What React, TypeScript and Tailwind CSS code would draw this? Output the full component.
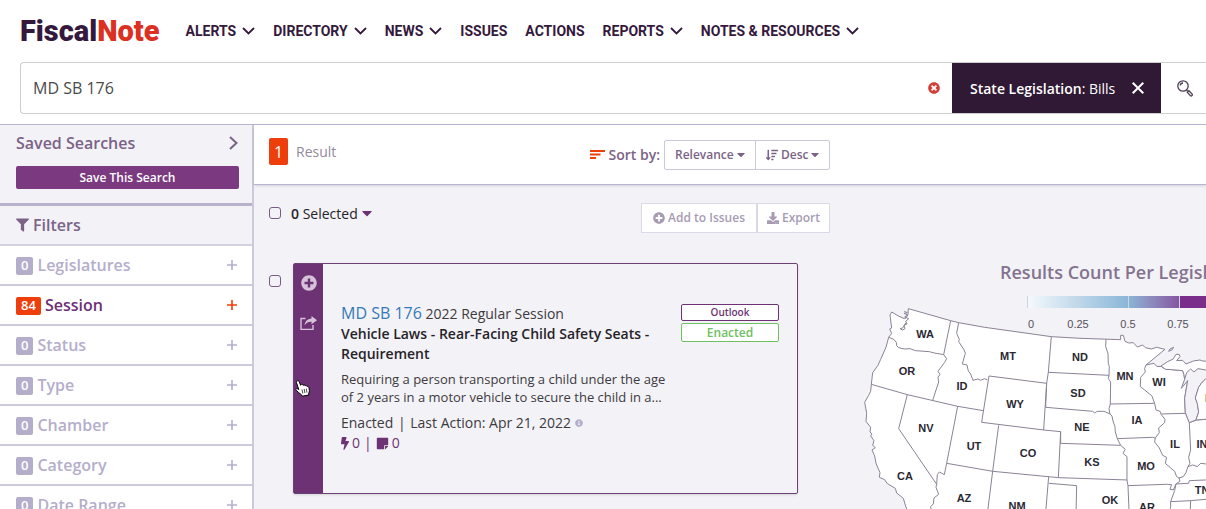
import React from 'react';
import {
  FaBolt,
  FaCaretDown,
  FaDownload,
  FaFilter,
  FaInfoCircle,
  FaPlusCircle,
  FaSortAmountDown,
  FaStickyNote,
  FaTimesCircle,
} from 'react-icons/fa';

const navItems = [
  { label: 'ALERTS', menu: true },
  { label: 'DIRECTORY', menu: true },
  { label: 'NEWS', menu: true },
  { label: 'ISSUES', menu: false },
  { label: 'ACTIONS', menu: false },
  { label: 'REPORTS', menu: true },
  { label: 'NOTES & RESOURCES', menu: true },
];

const filters = [
  { label: 'Legislatures', count: 0 },
  { label: 'Session', count: 84 },
  { label: 'Status', count: 0 },
  { label: 'Type', count: 0 },
  { label: 'Chamber', count: 0 },
  { label: 'Category', count: 0 },
  { label: 'Date Range', count: 0 },
];

// Label centers, in map pixels
const stateLabels = [
  { name: 'WA', x: 75, y: 88 },
  { name: 'OR', x: 57, y: 125 },
  { name: 'ID', x: 112, y: 140 },
  { name: 'MT', x: 158, y: 110 },
  { name: 'ND', x: 230, y: 111 },
  { name: 'SD', x: 228, y: 147 },
  { name: 'MN', x: 275, y: 130 },
  { name: 'WI', x: 309, y: 136 },
  { name: 'WY', x: 165, y: 158 },
  { name: 'NE', x: 232, y: 181 },
  { name: 'IA', x: 287, y: 174 },
  { name: 'NV', x: 76, y: 182 },
  { name: 'UT', x: 124, y: 200 },
  { name: 'CO', x: 178, y: 207 },
  { name: 'KS', x: 242, y: 216 },
  { name: 'MO', x: 296, y: 220 },
  { name: 'IL', x: 325, y: 198 },
  { name: 'IN', x: 352, y: 198 },
  { name: 'CA', x: 55, y: 230 },
  { name: 'AZ', x: 114, y: 252 },
  { name: 'NM', x: 167, y: 260 },
  { name: 'OK', x: 260, y: 254 },
  { name: 'AR', x: 297, y: 261 },
  { name: 'TN', x: 352, y: 244 },
  { name: 'MI', x: 361, y: 152 },
];

const land =
  'M175,176 L302,212 L326,218 L404,232 L604,260 L690,265 L812,269 L812,256 L820,256 L825,274 L836,279 L850,278 L862,291 L878,285 L886,293 L904,297 L920,292 L945,298 L915,323 L888,345 L912,340 L920,349 L935,350 L947,358 L965,359 L998,362 L1002,374 L1004,388 L994,415 L1013,392 L1004,445 L1006,488 L1018,518 L1040,510 L1068,508 L1120,508 L1120,800 L170,800 L170,777 L165,762 L160,745 L140,729 L136,715 L112,701 L104,689 L88,682 L90,668 L78,640 L74,618 L66,600 L76,593 L68,586 L72,572 L62,558 L66,552 L60,546 L62,532 L48,514 L50,490 L44,457 L56,436 L62,424 L64,403 L68,368 L84,346 L92,328 L108,292 L116,262 L125,250 L119,237 L125,234 L120,195 L125,186 L145,198 L163,206 L168,204 L174,194 Z';

const borders = [
  'M302,212 L281,314 L253,309 L238,305 L197,302 L180,296 L163,297 L146,293 L140,287 L139,277 L131,268 L116,262',
  'M281,314 L290,326 L284,337 L264,364 L270,373 L264,382 L266,396 L248,451',
  'M64,403 L172,434 L323,469 L400,482',
  'M326,218 L320,250 L328,268 L326,275 L342,299 L346,310 L337,342 L351,345 L355,363 L362,372 L369,391 L384,387 L392,391 L404,386 L412,390',
  'M417,378 L590,400 L581,540 L395,517 Z',
  'M604,260 L595,367 L590,400 L587,472',
  'M595,367 L777,376',
  'M768,268 L767,290 L774,310 L775,340 L778,350 L777,376 L775,386 L782,396 L781,462 L777,476 L780,492',
  'M587,472 L728,484 L734,489 L742,484 L762,484 L780,492 L786,498 L789,513 L795,530 L796,545 L802,566 L812,586 L826,598 L819,610 L831,620 L831,690 L834,707 L838,800',
  'M632,545 L632,580 L812,586',
  'M581,540 L632,545 L625,683 L428,664 L446,526',
  'M323,469 L290,640 L283,674 L268,666 L262,674 L260,703 L146,536 L172,434',
  'M290,640 L428,664',
  'M260,703 L258,712 L266,733 L252,744 L250,762 L242,770 L246,800',
  'M428,664 L411,800',
  'M596,680 L586,800',
  'M597,700 L680,707 L678,800',
  'M625,683 L831,690',
  'M781,462 L914,460',
  'M888,345 L884,356 L886,366 L872,382 L871,410 L884,420 L906,438 L914,460 L918,480 L930,484 L934,494 L945,508 L944,518 L926,534 L928,548 L916,564 L908,562 L802,566',
  'M934,492 L1006,490',
  'M916,564 L914,576 L928,594 L938,616 L950,622 L946,640 L962,654 L974,664 L980,680 L987,684 L990,694 L978,702 L970,720 L960,718 L965,704 L950,703 L834,707',
  'M978,702 L974,722 L962,755 L962,772 L954,800',
  'M1018,518 L1022,600 L1016,622 L1020,640 L1014,650 L1008,668 L1000,680 L987,684',
  'M1014,650 L1028,645 L1042,650 L1052,640 L1068,642',
  'M978,702 L1016,700 L1018,692 L1068,690',
  'M962,755 L1022,752 L1068,748',
  'M1022,752 L1020,800',
  'M163,184 L172,188 L162,190 L173,195 L164,201 L176,206 L167,214 L171,222 L162,226 L165,236 L158,240 L150,236 L158,234 L168,218',
  'M956,304 L960,297 L971,292 L966,300 Z',
];

const upperPeninsula =
  'M933,348 L953,335 L970,327 L978,313 L988,314 L990,320 L980,332 L998,331 L1008,342 L1030,333 L1050,330 L1058,333 L1090,335 L1090,356 L1068,360 L1044,356 L1032,366 L1022,357 L1010,368 L1004,388 L1002,374 L998,362 L965,359 L947,358 Z';

const lowerPeninsula = 'M1090,372 L1068,386 L1054,400 L1046,412 L1036,444 L1042,460 L1046,486 L1038,510 L1090,506 Z';

function Chevron() {
  return (
    <svg width="13" height="8" viewBox="0 0 13 8" fill="none" stroke="currentColor" strokeWidth="1.800">
      <path d="M1 1l5.500 5.500L12 1" />
    </svg>
  );
}

function Header() {
  return (
    <header className="flex h-[62px] shrink-0 items-center gap-[26px] whitespace-nowrap pl-5 font-['Roboto',sans-serif] text-[#35193d]">
      <a href="#home" className="text-[29px] font-black leading-none">
        Fiscal<span className="text-[#dc3023]">Note</span>
      </a>
      <nav className="flex items-center gap-[18px] text-[14px] font-bold">
        {navItems.map((item) => (
          <a key={item.label} href="#nav" className="flex items-center gap-[6px]">
            {item.label}
            {item.menu && <Chevron />}
          </a>
        ))}
      </nav>
    </header>
  );
}

function SearchBar() {
  return (
    <form className="flex shrink-0 pb-[10px] pl-5">
      <div className="flex h-[52px] flex-1 items-center rounded-l border border-r-0 border-[#cfcfcf]">
        <input
          aria-label="Search"
          defaultValue="MD SB 176"
          className="min-w-0 flex-1 pl-3 text-[16px] text-[#4a4a4a] outline-none"
        />
        <button type="button" aria-label="Clear search" className="mr-3 text-[12px] text-[#d43d33]">
          <FaTimesCircle />
        </button>
        <div className="flex h-full w-[209px] items-center justify-between bg-[#301934] pl-[18px] pr-[17px] text-[14px] text-white">
          <span>
            <span className="font-semibold">State Legislation</span>: Bills
          </span>
          <button type="button" aria-label="Remove filter">
            <svg width="12" height="12" viewBox="0 0 12 12" stroke="currentColor" strokeWidth="2">
              <path d="M.7.7l10.600 10.600M11.300.7L.7 11.300" />
            </svg>
          </button>
        </div>
        <button aria-label="Run search" className="w-[45px] pl-4 text-[#4d3c53]">
          <svg width="16" height="17" viewBox="0 0 16 17" fill="none" stroke="currentColor" strokeWidth="1.300">
            <circle cx="6" cy="6" r="5.200" />
            <path d="M3.200 5.500C3.400 4 4.500 3 6 3M9.500 10l1.300 1.400" />
            <path d="M10.300 12.200l1.600-1.500 3 3.200c.6.700.5 1.300.1 1.700-.5.500-1.200.5-1.700 0z" />
          </svg>
        </button>
      </div>
    </form>
  );
}

function Sidebar() {
  return (
    <aside className="w-[254px] shrink-0 border-r-2 border-[#cdc8dc] bg-[#f3f2f7] text-[16px] font-semibold">
      <div className="border-b-[3px] border-[#b7b1cd] pb-[14px] pl-4 pr-[13px] text-[#7a6386]">
        <a href="#saved" className="flex h-[36px] items-center justify-between pr-px">
          Saved Searches
          <svg width="9" height="14" viewBox="0 0 9 14" fill="none" stroke="currentColor" strokeWidth="2">
            <path d="M1 1l6.500 6L1 13" />
          </svg>
        </a>
        <button className="mt-[5px] h-[23px] w-full rounded-xs bg-[#7b3a80] text-[12px] text-white">
          Save This Search
        </button>
      </div>
      <h2 className="flex h-[40px] items-center gap-1 border-b-2 border-[#d5d1e2] px-4 text-[#7a6386]">
        <FaFilter className="h-[14px] w-[13px]" />
        Filters
      </h2>
      <ul>
        {filters.map((filter) => (
          <li key={filter.label} className="h-[40px] border-b-2 border-[#cdc9de] bg-white">
            <button
              className={`flex h-full w-full items-center gap-1 pl-4 pr-[13px] ${
                filter.count > 0 ? 'text-[#6d2f76]' : 'text-[#b5aecb]'
              }`}
            >
              <span
                className={`mt-[2px] flex h-[18px] items-center rounded-xs px-[5px] text-[13px] text-white ${
                  filter.count > 0 ? 'bg-[#ee3e0c]' : 'bg-[#b5aecb]'
                }`}
              >
                {filter.count}
              </span>
              {filter.label}
              <svg
                width="10"
                height="10"
                viewBox="0 0 10 10"
                strokeWidth="1.600"
                className={`ml-auto mr-[2px] ${filter.count > 0 ? 'stroke-[#ee3e0c]' : 'stroke-[#b5aecb]'}`}
              >
                <path d="M5 0v10M0 5h10" />
              </svg>
            </button>
          </li>
        ))}
      </ul>
    </aside>
  );
}

function ResultsBar() {
  return (
    <div className="flex h-[60px] shrink-0 items-center border-b border-[#b9b4d0] bg-white pl-[15px] text-[#7a6386] shadow-sm">
      <div className="flex w-[561px] items-center justify-between">
        <div className="flex items-center pb-[6px]">
          <span className="flex h-[27px] w-[19px] items-center justify-center rounded-xs bg-[#ee3e0c] text-[16px] text-white">
            1
          </span>
          <span className="ml-2 text-[14px] text-[#94899c]">Result</span>
        </div>
        <div className="flex items-center">
          <svg width="15" height="9" viewBox="0 0 15 9" className="mr-[3px] stroke-[#ee3e0c]" strokeWidth="1.800">
            <path d="M0 1h15M0 4.500h10.500M0 8h6" />
          </svg>
          <span className="text-[14px] font-semibold">Sort by:</span>
          <div className="ml-1 flex h-[30px] rounded-xs border border-[#cdc8dc] text-[12px] font-semibold">
            <label className="relative flex items-center border-r border-[#cdc8dc]">
              <select aria-label="Sort field" className="h-full appearance-none pl-[10px] pr-[21px] outline-none">
                <option>Relevance</option>
                <option>Date</option>
              </select>
              <FaCaretDown className="pointer-events-none absolute right-[10px] h-[13px] w-[8px]" />
            </label>
            <label className="relative flex items-center pl-[10px]">
              <FaSortAmountDown />
              <select aria-label="Sort order" className="h-full appearance-none pl-[3px] pr-[20px] outline-none">
                <option>Desc</option>
                <option>Asc</option>
              </select>
              <FaCaretDown className="pointer-events-none absolute right-[10px] h-[13px] w-[8px]" />
            </label>
          </div>
        </div>
      </div>
    </div>
  );
}

function BillCard() {
  return (
    <article className="relative flex h-[231px] flex-1 rounded-xs border border-[#6d4078] shadow">
      <div className="flex w-[29px] flex-col items-center gap-[25px] bg-[#6d3274] pt-[11px] text-[#d6c3da]">
        <button aria-label="Add to issue" className="text-[16px]">
          <FaPlusCircle />
        </button>
        <button aria-label="Share">
          <svg width="17" height="14" viewBox="0 0 17 14">
            <path d="M5.500 2.500H1v11h12V9" fill="none" stroke="currentColor" strokeWidth="1.400" />
            <path d="M11.500 0L17 4.200l-5.500 4V5.800C8.500 5.600 6.500 6.700 4.500 9.300 5 5.500 7.500 2.800 11.500 2.500z" fill="currentColor" />
          </svg>
        </button>
      </div>
      <div className="flex flex-1 justify-between pl-[18px] pr-[18px] pt-[39px] text-[14px] leading-5 text-[#3d3a40]">
        <div className="w-[330px]">
          <div>
            <a href="#bill" className="text-[16px] font-medium text-[#337ab7]">
              MD SB 176
            </a>{' '}
            2022 Regular Session
          </div>
          <h3 className="font-semibold text-[#262328]">
            Vehicle Laws - Rear-Facing Child Safety Seats - Requirement
          </h3>
          <p className="mt-[6px] text-[13px] leading-[18px]">
            Requiring a person transporting a child under the age of 2 years in a motor vehicle to secure the child in
            a...
          </p>
          <p className="mt-[7px] flex items-center gap-1">
            <span>
              Enacted <span className="px-px">|</span> Last Action: Apr 21, 2022
            </span>
            <FaInfoCircle className="text-[8px] text-[#b5aecb]" />
          </p>
          <p className="flex items-center gap-[3px] text-[#6d3274]">
            <FaBolt className="h-[13px] w-[8px]" />
            0 <span className="px-px">|</span>
            <FaStickyNote className="text-[13px]" />
            0
          </p>
        </div>
        <div className="w-[98px] pt-px text-center">
          <button className="block h-[17px] w-full rounded-xs border border-[#6d3274] bg-white text-[10px] font-semibold leading-[15px] text-[#6d3274]">
            Outlook
          </button>
          <div className="mt-[2px] h-[19px] rounded-xs border border-[#6fbf63] bg-white text-[12px] font-semibold leading-[17px] text-[#6fbf63]">
            Enacted
          </div>
        </div>
      </div>
      {/* Pointer hovering the action strip */}
      <svg width="15" height="17" viewBox="0 0 15 17" className="absolute left-px top-[116px]">
        <path
          d="M2.200 1C3.200.4 4 .9 4.300 1.800L5.600 5.300l.6-.8c.7-.5 1.400-.2 1.700.4l.3.500c.8-.8 1.600-.5 2 .4.8-.5 1.500-.2 1.900.6.9-.3 1.400.1 1.700 1 .6 2.200 1 4-.2 6.200l.2 1.400-6.500 1.200-.7-1.300C4.500 13.400 3 12 1.200 10.200c-.9-1-.1-2 1.100-1.500l1.500.9L1.500 2.800C1.200 1.900 1.500 1.300 2.200 1z"
          fill="white"
          stroke="black"
        />
        <path d="M7 9.500l.8 4M9.200 9l.7 4M11.300 8.600l.6 4" stroke="black" strokeWidth=".7" />
      </svg>
    </article>
  );
}

function ResultsMap() {
  return (
    <section className="min-w-0 flex-1 overflow-hidden pt-[75px]">
      <h2 className="whitespace-nowrap pl-[170px] text-[18px] font-semibold leading-6 text-[#84738f]">
        Results Count Per Legislature
      </h2>
      <div className="ml-[197px] mt-[12px] grid h-[12px] w-[202px] grid-cols-4 bg-linear-to-r from-[#f5fafc] via-[#8ab6d7] via-50% to-[#7b2d8c] to-85%">
        <span className="border-l border-[#cfd4dc]" />
        <span className="border-l border-[#cfd4dc]" />
        <span className="border-l border-[#cfd4dc]" />
        <span className="border-l border-[#cfd4dc] bg-[#7b2d8c]" />
      </div>
      <div className="ml-[173px] mt-2 grid w-[200px] grid-cols-4 text-center font-['Liberation_Sans',sans-serif] text-[11px] leading-4 text-[#55505a]">
        <span className="pl-[6px]">0</span>
        <span>0.25</span>
        <span>0.5</span>
        <span>0.75</span>
      </div>
      <svg width="376" height="259" viewBox="0 0 376 259" className="-mt-[82px] ml-5 overflow-visible">
        <g transform="scale(.3333)" stroke="#8b8296" strokeWidth="3" strokeLinejoin="round">
          <path d={land} fill="white" />
          <path d={upperPeninsula} fill="white" />
          <path
            d="M1090,372 L1068,386 L1054,400 L1046,412 L1036,444 L1042,460 L1046,486 L1038,510 L1018,518 L1006,488 L1004,445 L1013,392"
            fill="#f3f2f7"
          />
          <path d={lowerPeninsula} fill="white" />
          {borders.map((d) => (
            <path key={d} d={d} fill="none" />
          ))}
        </g>
        <g
          className="font-['Liberation_Sans',sans-serif] text-[11px] font-bold"
          fill="#2b2833"
          textAnchor="middle"
        >
          {stateLabels.map((state) => (
            <text key={state.name} x={state.x} y={state.y}>
              {state.name}
            </text>
          ))}
        </g>
      </svg>
    </section>
  );
}

export default function App() {
  return (
    <div className="flex h-screen flex-col overflow-hidden bg-white font-['Open_Sans',sans-serif]">
      <Header />
      <SearchBar />
      <div className="flex min-h-0 flex-1 border-t border-[#b9b4d0]">
        <Sidebar />
        <main className="flex min-w-0 flex-1 flex-col bg-[#f3f2f7]">
          <ResultsBar />
          <div className="flex min-h-0 flex-1">
            <div className="w-[576px] shrink-0 pl-[15px] pt-[18px]">
              <div className="flex h-[30px] items-center text-[14px]">
                <input
                  type="checkbox"
                  aria-label="Select all"
                  className="mb-[10px] size-[12px] appearance-none rounded-[3px] border border-[#7a5a86]"
                />
                <button className="mb-[10px] ml-[10px] flex items-center gap-1 text-[#262328]">
                  <span>
                    <span className="font-semibold">0</span> Selected
                  </span>
                  <FaCaretDown className="h-4 w-[10px] text-[#6d3274]" />
                </button>
                <div className="ml-auto flex h-[30px] text-[12px] font-semibold text-[#a79bb3]">
                  <button className="flex items-center gap-[3px] border border-[#dcd8e6] bg-white px-[11px]">
                    <FaPlusCircle />
                    Add to Issues
                  </button>
                  <button className="flex items-center gap-[3px] border border-[#dcd8e6] bg-white px-[9px]">
                    <FaDownload />
                    Export
                  </button>
                </div>
              </div>
              <div className="mt-[30px] flex pr-8">
                <input
                  type="checkbox"
                  aria-label="Select MD SB 176"
                  className="mr-3 mt-[12px] size-[12px] appearance-none rounded-[3px] border border-[#7a5a86]"
                />
                <BillCard />
              </div>
            </div>
            <ResultsMap />
          </div>
        </main>
      </div>
    </div>
  );
}
